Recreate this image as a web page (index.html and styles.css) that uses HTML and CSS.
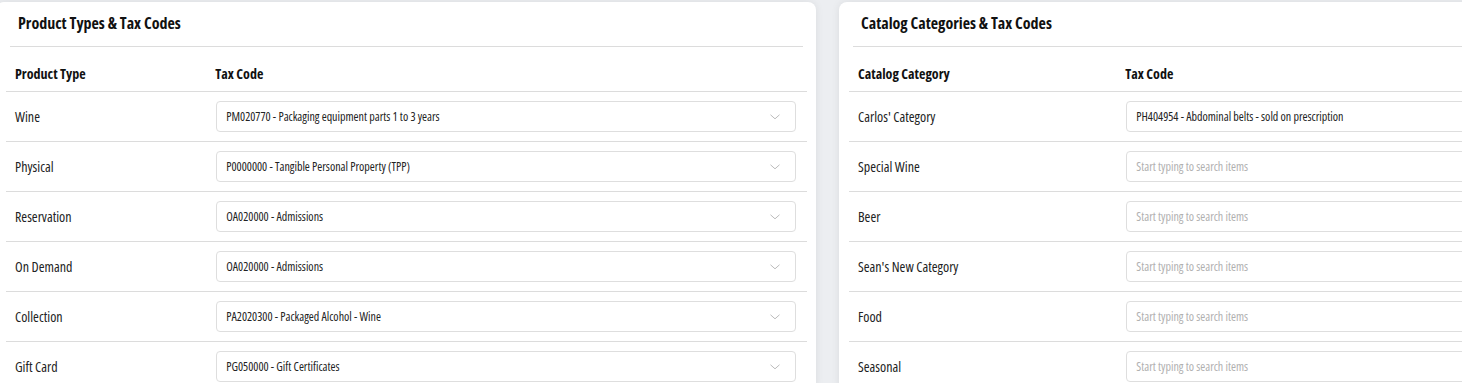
FILE: index.html
```html
<!DOCTYPE html>
<html lang="en">
<head>
    <meta charset="UTF-8">
    <meta name="viewport" content="width=device-width, initial-scale=1.0">
    <title>Tax Codes</title>
    <link rel="stylesheet" href="styles.css">
</head>
<body>

    <div class="panels">

        <!-- product types -->
        <div class="card card-left">
            <h2 class="card-title">Product Types &amp; Tax Codes</h2>
            <table class="tax-table">
                <thead>
                    <tr><th class="col-name">Product Type</th><th>Tax Code</th></tr>
                </thead>
                <tbody>
                    <tr>
                        <td>Wine</td>
                        <td><div class="select">PM020770 - Packaging equipment parts 1 to 3 years<svg class="chevron" width="10" height="6" viewBox="0 0 10 6"><path d="M0.5 0.8 L5 4.8 L9.5 0.8"/></svg></div></td>
                    </tr>
                    <tr>
                        <td>Physical</td>
                        <td><div class="select">P0000000 - Tangible Personal Property (TPP)<svg class="chevron" width="10" height="6" viewBox="0 0 10 6"><path d="M0.5 0.8 L5 4.8 L9.5 0.8"/></svg></div></td>
                    </tr>
                    <tr>
                        <td>Reservation</td>
                        <td><div class="select">OA020000 - Admissions<svg class="chevron" width="10" height="6" viewBox="0 0 10 6"><path d="M0.5 0.8 L5 4.8 L9.5 0.8"/></svg></div></td>
                    </tr>
                    <tr>
                        <td>On Demand</td>
                        <td><div class="select">OA020000 - Admissions<svg class="chevron" width="10" height="6" viewBox="0 0 10 6"><path d="M0.5 0.8 L5 4.8 L9.5 0.8"/></svg></div></td>
                    </tr>
                    <tr>
                        <td>Collection</td>
                        <td><div class="select">PA2020300 - Packaged Alcohol - Wine<svg class="chevron" width="10" height="6" viewBox="0 0 10 6"><path d="M0.5 0.8 L5 4.8 L9.5 0.8"/></svg></div></td>
                    </tr>
                    <tr>
                        <td>Gift Card</td>
                        <td><div class="select">PG050000 - Gift Certificates<svg class="chevron" width="10" height="6" viewBox="0 0 10 6"><path d="M0.5 0.8 L5 4.8 L9.5 0.8"/></svg></div></td>
                    </tr>
                </tbody>
            </table>
        </div>

        <!-- catalog categories -->
        <div class="card card-right">
            <h2 class="card-title">Catalog Categories &amp; Tax Codes</h2>
            <table class="tax-table">
                <thead>
                    <tr><th class="col-name">Catalog Category</th><th>Tax Code</th></tr>
                </thead>
                <tbody>
                    <tr>
                        <td>Carlos' Category</td>
                        <td><div class="select">PH404954 - Abdominal belts - sold on prescription</div></td>
                    </tr>
                    <tr>
                        <td>Special Wine</td>
                        <td><div class="select placeholder">Start typing to search items</div></td>
                    </tr>
                    <tr>
                        <td>Beer</td>
                        <td><div class="select placeholder">Start typing to search items</div></td>
                    </tr>
                    <tr>
                        <td>Sean's New Category</td>
                        <td><div class="select placeholder">Start typing to search items</div></td>
                    </tr>
                    <tr>
                        <td>Food</td>
                        <td><div class="select placeholder">Start typing to search items</div></td>
                    </tr>
                    <tr>
                        <td>Seasonal</td>
                        <td><div class="select placeholder">Start typing to search items</div></td>
                    </tr>
                </tbody>
            </table>
        </div>

    </div>

</body>
</html>
```

FILE: styles.css
```css
body {
    margin: 0;
    background-color: #eceef1;
    font-family: "Open Sans", "Liberation Sans", sans-serif;
    font-stretch: 75%;
    color: #222;
    overflow: hidden;
}

.panels {
    display: flex;
    gap: 23px;
    margin-left: -4px;
    padding-top: 2px;
}

.card {
    flex-shrink: 0;
    background: #fff;
    border-radius: 8px;
    box-shadow: 0 0 8px rgba(0, 0, 0, 0.08);
}

.card-left {
    width: 820px;
}

.card-right {
    width: 1088px;
}

.card-title {
    margin: 0 13px 0 14px;
    padding: 11px 0 13px 8px;
    font-size: 16px;
    line-height: 20px;
    font-weight: 700;
    color: #111;
    border-bottom: 1px solid #dcdcdc;
}

.tax-table {
    width: calc(100% - 19px);
    margin: 9px 9px 0 10px;
    border-collapse: collapse;
}

.tax-table th {
    text-align: left;
    font-size: 14px;
    font-weight: 700;
    color: #111;
    height: 35px;
    padding: 0 9px;
    border-bottom: 1px solid #dcdcdc;
}

.tax-table .col-name {
    width: 25%;
}

.tax-table td {
    height: 49px;
    padding: 0 11px 0 10px;
    font-size: 14px;
    border-bottom: 1px solid #dcdcdc;
}

.tax-table td:first-child {
    padding-left: 9px;
}

.select {
    position: relative;
    height: 29px;
    line-height: 29px;
    border: 1px solid #dedede;
    border-radius: 4px;
    padding-left: 9px;
    font-size: 12px;
    color: #222;
}

.select.placeholder {
    color: #b0b0b0;
}

/* little arrow on the right */
.chevron {
    position: absolute;
    right: 15px;
    top: 12px;
    fill: none;
    stroke: #bbb;
    stroke-width: 1;
}
```
